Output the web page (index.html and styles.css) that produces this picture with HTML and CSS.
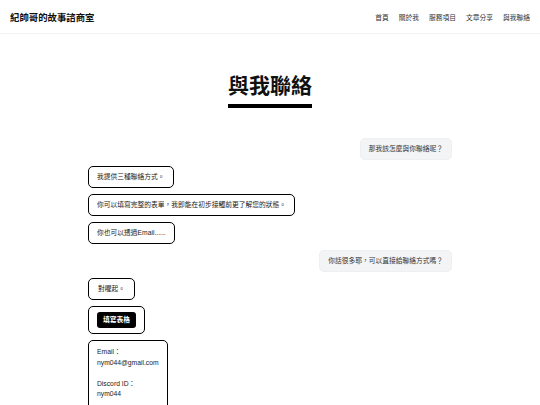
FILE: index.html
```html
<!DOCTYPE html>
<html lang="zh-Hant">
<head>
<meta charset="utf-8">
<title>與我聯絡</title>
<link rel="stylesheet" href="styles.css">
</head>
<body>
<header class="site-header">
  <div class="brand">紀帥哥的故事諮商室</div>
  <nav class="nav">
    <a href="#">首頁</a>
    <a href="#">關於我</a>
    <a href="#">服務項目</a>
    <a href="#">文章分享</a>
    <a href="#">與我聯絡</a>
  </nav>
</header>
<main class="page">
  <div class="title-wrap"><h1 class="title">與我聯絡</h1></div>
  <section class="chat">
    <div class="bubble user">那我該怎麼與你聯絡呢？</div>
    <div class="bubble bot">我提供三種聯絡方式。</div>
    <div class="bubble bot">你可以填寫完整的表單，我即能在初步接觸前更了解您的狀態。</div>
    <div class="bubble bot">你也可以透過Email......</div>
    <div class="bubble user">你話很多耶，可以直接給聯絡方式嗎？</div>
    <div class="bubble bot short">對喔起。</div>
    <div class="bubble bot btn-bubble"><a class="btn" href="#">填寫表格</a></div>
    <div class="bubble bot info">Email：<br>nym044@gmail.com<br><br>Discord ID：<br>nym044<br><br></div>
  </section>
</main>
</body>
</html>
```
FILE: styles.css
```css
* { box-sizing: border-box; }
body {
  margin: 0;
  background: #fff;
  color: #222;
  font-family: "Liberation Sans", "Noto Sans CJK TC", sans-serif;
}
.site-header {
  display: flex;
  justify-content: space-between;
  align-items: center;
  height: 34px;
  padding: 0 10px;
  border-bottom: 1px solid #f2f2f2;
}
.brand {
  font-size: 9.4px;
  font-weight: 700;
  color: #111;
}
.nav {
  display: flex;
  gap: 10px;
}
.nav a {
  font-size: 6.75px;
  color: #333;
  text-decoration: none;
}
.title-wrap {
  text-align: center;
  margin-top: 39px;
}
.title {
  display: inline-block;
  margin: 0;
  font-size: 21px;
  line-height: 25px;
  font-weight: 700;
  color: #111;
  padding-bottom: 6px;
  border-bottom: 4px solid #000;
}
.chat {
  width: 364px;
  margin: 30px auto 0;
  display: flex;
  flex-direction: column;
  gap: 6px;
}
.bubble {
  font-size: 6.75px;
  line-height: 10px;
  padding: 5px 8px;
  border-radius: 5px;
  border: 1px solid #000;
  color: #222;
}
.user {
  align-self: flex-end;
  background: #f3f4f6;
  border-color: #eeeff1;
  color: #333;
}
.bot {
  align-self: flex-start;
  background: #fff;
}
.short {
  padding: 5px 9px;
}
.btn-bubble {
  padding: 5px 8px;
}
.btn {
  display: block;
  background: #000;
  color: #fff;
  font-weight: 700;
  text-decoration: none;
  font-size: 6.75px;
  line-height: 16px;
  padding: 0 6px;
  border-radius: 3px;
}
.info {
  line-height: 10.5px;
  padding-top: 6px;
}
```
